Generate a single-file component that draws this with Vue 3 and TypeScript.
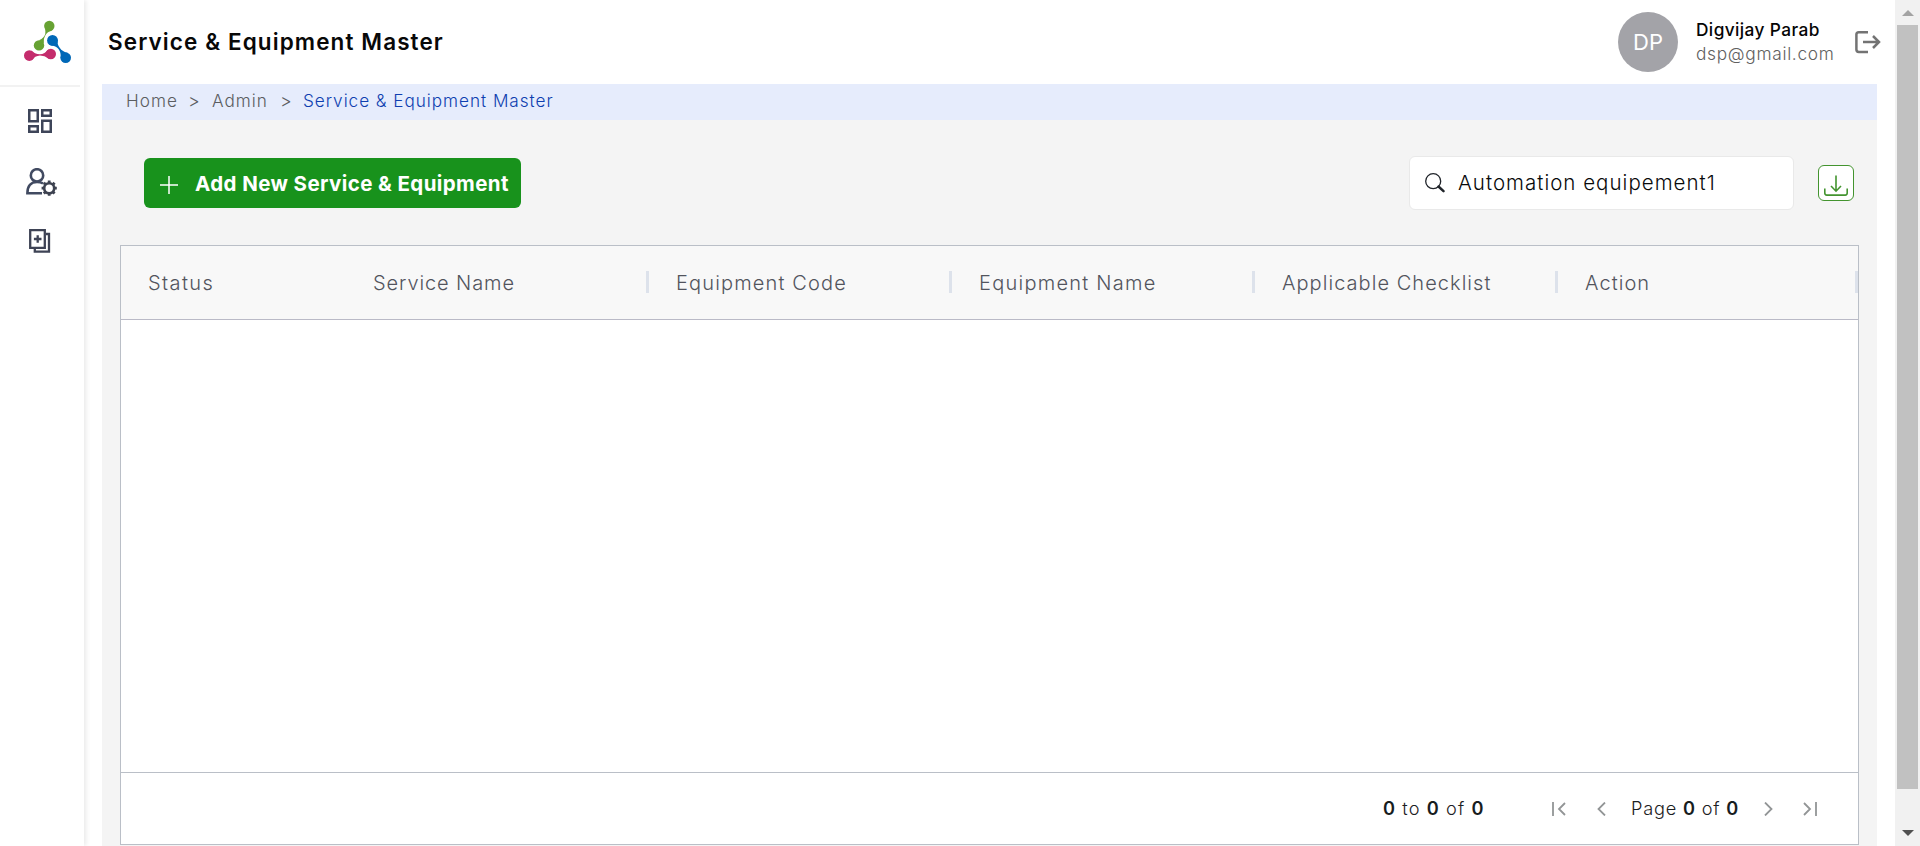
<script setup lang="ts">
interface Column {
  label: string
  key: string
  resizable: boolean
}

const columns: Column[] = [
  { label: 'Status', key: 'col-status', resizable: false },
  { label: 'Service Name', key: 'col-service', resizable: true },
  { label: 'Equipment Code', key: 'col-code', resizable: true },
  { label: 'Equipment Name', key: 'col-name', resizable: true },
  { label: 'Applicable Checklist', key: 'col-checklist', resizable: true },
  { label: 'Action', key: 'col-action', resizable: true },
]
</script>

<template>
  <div class="app">
    <aside class="sidebar">
      <div class="brand">
        <svg width="48" height="44" viewBox="0 0 48 44">
          <g fill="#67a233">
            <circle cx="25.3" cy="6" r="5.2" />
            <circle cx="15" cy="25.4" r="5.2" />
            <path d="M21 9 Q22.4 14 19.4 17.3 Q17 20 15 20.3 L19.8 23.4 Q19.2 19 21 16 Q23.2 11.8 27.3 10.8Z" />
          </g>
          <g fill="#c42c6c">
            <circle cx="5.3" cy="35.6" r="5.3" />
            <circle cx="26.8" cy="34" r="5.2" />
            <path d="M7 30.6 Q11 34.4 16 34.3 Q20.5 34 24.8 29.2 L25 38.8 Q20.5 35.5 16 35.5 Q11 35.7 7.5 40.4Z" />
          </g>
          <g fill="#0068b7">
            <circle cx="28.5" cy="20.4" r="5.4" />
            <circle cx="41.7" cy="37.7" r="5.3" />
            <path d="M33.7 19 Q32.8 24 35.7 27.8 Q38.5 32 43.8 32.8 L36.5 38.5 Q37.5 33 34.5 29 Q31.5 25.2 26.7 25.4Z" />
          </g>
        </svg>
      </div>
      <nav class="menu">
        <svg class="dash" width="24" height="24" viewBox="0 0 24 24" fill="none" stroke="#3e4559" stroke-width="2.5">
          <path d="M1.25 1.25h8.5v11h-8.5zM14.25 1.25h8.5v5.6h-8.5zM1.25 17.15h8.5v5.6h-8.5zM14.25 11.75h8.5v11h-8.5z" />
        </svg>
        <svg class="user" width="32" height="28" viewBox="0 0 32 28" fill="none" stroke="#414a61" stroke-width="2.6">
          <circle cx="11" cy="7.4" r="6.2" />
          <path d="M17 15.4Q14.5 14 11 14C5 14 1.4 18 1.4 25.2H16" />
          <g stroke="#3d4250">
            <circle cx="23.2" cy="20.2" r="5" />
            <path stroke-width="2.8" d="M23.2 12.6v2.4M23.2 25.4v2.4M15.6 20.2H18M28.4 20.2h2.4M17.8 14.8l1.7 1.7M26.9 23.9l1.7 1.7M28.6 14.8l-1.7 1.7M19.5 23.9l-1.7 1.7" />
          </g>
        </svg>
        <svg class="copy" width="22" height="24" viewBox="0 0 22 24" fill="none" stroke="#3e4355" stroke-width="2.3">
          <path d="M1.2 1.2h14.6v17.6H1.2zM17 5h3v17.6H5.8V19.5" />
          <path d="M8.7 6.2v7.6M4.9 10h7.6" />
        </svg>
      </nav>
    </aside>

    <main class="main">
      <header class="header">
        <h1 class="title">Service &amp; Equipment Master</h1>
        <div class="avatar">DP</div>
        <div class="person">
          <div class="name">Digvijay Parab</div>
          <div class="email">dsp@gmail.com</div>
        </div>
        <svg class="logout" width="26" height="24" viewBox="0 0 26 24" fill="none" stroke="#737373" stroke-width="2.5">
          <path d="M13 2.2H3.8Q1.4 2.2 1.4 4.6V19.6Q1.4 22 3.8 22H13M8 12H24M18 6l6 6-6 6" />
        </svg>
      </header>

      <section class="page">
        <div class="crumbs">
          <span class="home">Home</span><span class="sep">&gt;</span>
          <span class="admin">Admin</span><span class="sep">&gt;</span>
          <span class="current">Service &amp; Equipment Master</span>
        </div>

        <div class="toolbar">
          <button class="add">
            <svg width="18" height="18" viewBox="0 0 18 18" stroke="#fff" stroke-width="1.5"><path d="M9 0v18M0 9h18" /></svg>
            <span>Add New Service &amp; Equipment</span>
          </button>
          <div class="search">
            <svg width="20" height="20" viewBox="0 0 20 20" fill="none" stroke="#20242a">
              <circle cx="8.2" cy="8.2" r="7.5" stroke-width="1.3" />
              <path d="M13.5 13.5l5 4.6" stroke-width="2.5" stroke-linecap="round" />
            </svg>
            <span>Automation equipement1</span>
          </div>
          <button class="download">
            <svg width="24" height="22" viewBox="0 0 24 22" fill="none" stroke="#43942f" stroke-width="1.6">
              <path d="M12 .5v15.7M7 11l5 5.2 5-5.2M.8 13.5v4.6q0 2 2 2h18.4q2 0 2-2v-4.6" />
            </svg>
          </button>
        </div>

        <div class="grid">
          <div class="grid-head">
            <div v-for="c in columns" :key="c.key" class="cell" :class="c.key">
              <span>{{ c.label }}</span>
              <i v-if="c.resizable" class="handle"></i>
            </div>
          </div>
          <div class="grid-body"></div>
          <div class="pager">
            <span class="range"><b>0</b> to <b>0</b> of <b>0</b></span>
            <svg class="first" width="14" height="14" viewBox="0 0 14 14"><path d="M1 0v14M13 1L7 7l6 6" /></svg>
            <svg class="prev" width="9" height="14" viewBox="0 0 9 14"><path d="M8 .5L1.5 7 8 13.5" /></svg>
            <span class="pages">Page <b>0</b> of <b>0</b></span>
            <svg class="next" width="9" height="14" viewBox="0 0 9 14"><path d="M1 .5L7.5 7 1 13.5" /></svg>
            <svg class="last" width="14" height="14" viewBox="0 0 14 14"><path d="M13 0v14M1 1l6 6-6 6" /></svg>
          </div>
        </div>
      </section>
    </main>

    <div class="scrollbar">
      <svg class="up" width="12" height="6" viewBox="0 0 12 6"><path d="M6 0l6 6H0z" fill="#a3a3a3" /></svg>
      <div class="thumb"></div>
      <svg class="down" width="12" height="6" viewBox="0 0 12 6"><path d="M0 0h12L6 6z" fill="#505050" /></svg>
    </div>
  </div>
</template>

<style>
html,
body {
  overflow: hidden;
}
</style>

<style scoped>
.app {
  display: flex;
  width: 1920px;
  height: 846px;
  overflow: hidden;
  background: #fff;
  font-family: Inter, Roboto, sans-serif;
  font-weight: 300;
  white-space: nowrap;
}
.app svg {
  display: block;
  flex: none;
}
button {
  font-family: inherit;
  padding: 0;
  margin: 0;
}
.sidebar {
  flex: none;
  width: 84px;
  box-shadow: 2px 0 5px rgba(0, 0, 0, 0.09);
}
.brand {
  box-sizing: border-box;
  width: 80px;
  height: 87px;
  padding: 20px 0 0 24px;
  border-bottom: 2px solid #f2f2f2;
}
.menu {
  display: flex;
  flex-direction: column;
  padding-top: 22px;
}
.dash {
  margin-left: 28px;
}
.user {
  margin: 35px 0 0 26px;
}
.copy {
  margin: 33px 0 0 29px;
}
.main {
  flex: none;
  width: 1811px;
}
.header {
  display: flex;
  align-items: center;
  height: 84px;
}
.title {
  margin: 0;
  width: 1510px;
  padding-left: 24px;
  font-size: 22.5px;
  line-height: 30px;
  font-weight: 600;
  letter-spacing: 1.1px;
  color: #080808;
}
.avatar {
  width: 60px;
  height: 60px;
  border-radius: 50%;
  background: #a3a3a8;
  color: #fff;
  text-align: center;
  font-size: 22px;
  font-weight: 400;
  line-height: 60px;
}
.person {
  width: 159px;
  padding-left: 18px;
  font-size: 17.3px;
  line-height: 24px;
}
.name {
  font-weight: 500;
  letter-spacing: 0.4px;
  color: #050505;
}
.email {
  letter-spacing: 0.7px;
  color: #606060;
}
.page {
  width: 1775px;
  height: 762px;
  margin-left: 18px;
  background: #f4f4f4;
}
.crumbs {
  display: flex;
  box-sizing: border-box;
  height: 36px;
  padding-left: 24px;
  background: #e6ecfc;
  font-size: 17.2px;
  line-height: 34px;
  color: #5b5d61;
}
.home,
.admin {
  letter-spacing: 1px;
}
.home {
  width: 62px;
}
.admin {
  width: 68px;
}
.sep {
  width: 24px;
  font-size: 18px;
}
.current {
  margin-left: -1px;
  color: #0f3fb0;
  letter-spacing: 0.95px;
}
.toolbar {
  display: flex;
  align-items: center;
  height: 54px;
  padding: 36px 0 35px 42px;
}
.add {
  display: flex;
  align-items: center;
  width: 377px;
  height: 50px;
  padding-left: 16px;
  border: 0;
  border-radius: 6px;
  background: #18921c;
  color: #fff;
  font-size: 20.5px;
  font-weight: 700;
  letter-spacing: 0.4px;
}
.add span {
  margin: 1px 0 0 17px;
}
.add svg {
  margin-top: 3px;
}
.search {
  display: flex;
  align-items: center;
  box-sizing: border-box;
  width: 385px;
  height: 54px;
  margin-left: 888px;
  padding-left: 15px;
  border: 1px solid #e9e9e9;
  border-radius: 6px;
  background: #fff;
  color: #08090a;
  font-size: 20.5px;
  letter-spacing: 1.02px;
}
.search span {
  margin: -2px 0 0 13px;
}
.download {
  display: flex;
  justify-content: center;
  box-sizing: border-box;
  width: 36px;
  height: 36px;
  margin: 0 0 0 24px;
  padding-top: 9px;
  border: 1.5px solid #43942f;
  border-radius: 6px;
  background: #fff;
}
.grid {
  box-sizing: border-box;
  width: 1739px;
  height: 600px;
  margin-left: 18px;
  border: 1px solid #babfc7;
  background: #fff;
}
.grid-head {
  display: flex;
  height: 73px;
  border-bottom: 1px solid #babac7;
  background: #f8f8f8;
  color: #52545d;
  font-size: 20px;
  letter-spacing: 1.05px;
}
.cell {
  display: flex;
  align-items: center;
  justify-content: space-between;
  box-sizing: border-box;
  width: 303px;
  padding-left: 27px;
  flex: none;
}
.col-status {
  width: 225px;
  letter-spacing: 1.4px;
}
.col-service {
  letter-spacing: 0.9px;
}
.col-code {
  letter-spacing: 1.15px;
}
.col-name {
  letter-spacing: 1.25px;
}
.col-action {
  width: 300px;
}
.handle {
  width: 3px;
  height: 22px;
  margin-bottom: 1px;
  background: #dde2eb;
}
.grid-body {
  height: 452px;
  border-bottom: 1px solid #babfc7;
}
.pager {
  display: flex;
  align-items: center;
  height: 71px;
  color: #1c2022;
  font-size: 18.2px;
}
.pager svg {
  fill: none;
  stroke: #929596;
  stroke-width: 1.8;
}
.pager b {
  font-weight: 600;
  color: #181d1f;
}
.range {
  width: 169px;
  margin: -1px 0 0 1262px;
  letter-spacing: 1.1px;
}
.prev {
  margin-left: 31px;
}
.pages {
  width: 133px;
  margin: -1px 0 0 25px;
  letter-spacing: 0.8px;
}
.last {
  margin-left: 30px;
}
.scrollbar {
  display: flex;
  flex-direction: column;
  align-items: center;
  box-sizing: border-box;
  width: 25px;
  height: 846px;
  padding-top: 10px;
  background: #f1f1f1;
}
.thumb {
  width: 21px;
  height: 764px;
  margin-top: 9px;
  background: #c1c1c1;
}
.down {
  margin-top: 41px;
}
</style>
